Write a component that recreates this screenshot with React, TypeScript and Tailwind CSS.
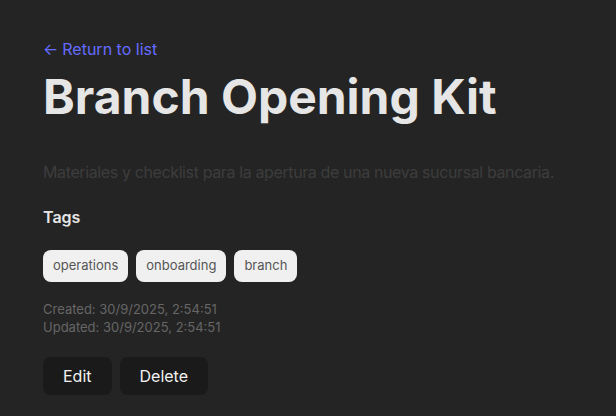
export default function App() {
  const tags = ["operations", "onboarding", "branch"]

  return (
    <div
      className="min-h-screen w-full bg-[#242424] text-[rgba(255,255,255,0.87)] px-[43px] pt-[37px]"
      style={{ fontFamily: "Inter, 'Noto Sans', sans-serif" }}
    >
      {/* Back link */}
      <a href="#" className="flex items-center gap-1 text-[#646cff] text-base leading-6 font-normal">
        <span>←</span>
        <span>Return to list</span>
      </a>

      {/* Title */}
      <h1 className="mt-[10px] text-[48px] leading-[52.8px] font-bold text-[#e6e6e6]">
        Branch Opening Kit
      </h1>

      <p className="mt-[36px] text-base leading-6 text-[#3d3d3d] whitespace-nowrap tracking-[-0.38px]">
        Materiales y checklist para la apertura de una nueva sucursal bancaria.
      </p>

      {/* Tags */}
      <h3 className="mt-[21px] text-base leading-6 font-semibold text-[#e6e6e6]">Tags</h3>
      <div className="mt-[21px] flex gap-2">
        {tags.map((t) => (
          <span
            key={t}
            className="h-[32px] flex items-center px-[10px] rounded-lg bg-[#f0f0f0] text-[#555] text-[13px]"
          >
            {t}
          </span>
        ))}
      </div>

      {/* Dates */}
      <div className="mt-[18px] text-[13px] leading-[18px] text-[#666]">
        <div>Created: 30/9/2025, 2:54:51</div>
        <div>Updated: 30/9/2025, 2:54:51</div>
      </div>

      {/* Actions */}
      <div className="mt-[21px] flex gap-2">
        <button className="h-[38px] px-[19px] rounded-lg bg-[#1a1a1a] border border-transparent text-base font-normal text-[#f2f2f2]">
          Edit
        </button>
        <button className="h-[38px] px-[19px] rounded-lg bg-[#1a1a1a] border border-transparent text-base font-normal text-[#f2f2f2]">
          Delete
        </button>
      </div>
    </div>
  )
}
